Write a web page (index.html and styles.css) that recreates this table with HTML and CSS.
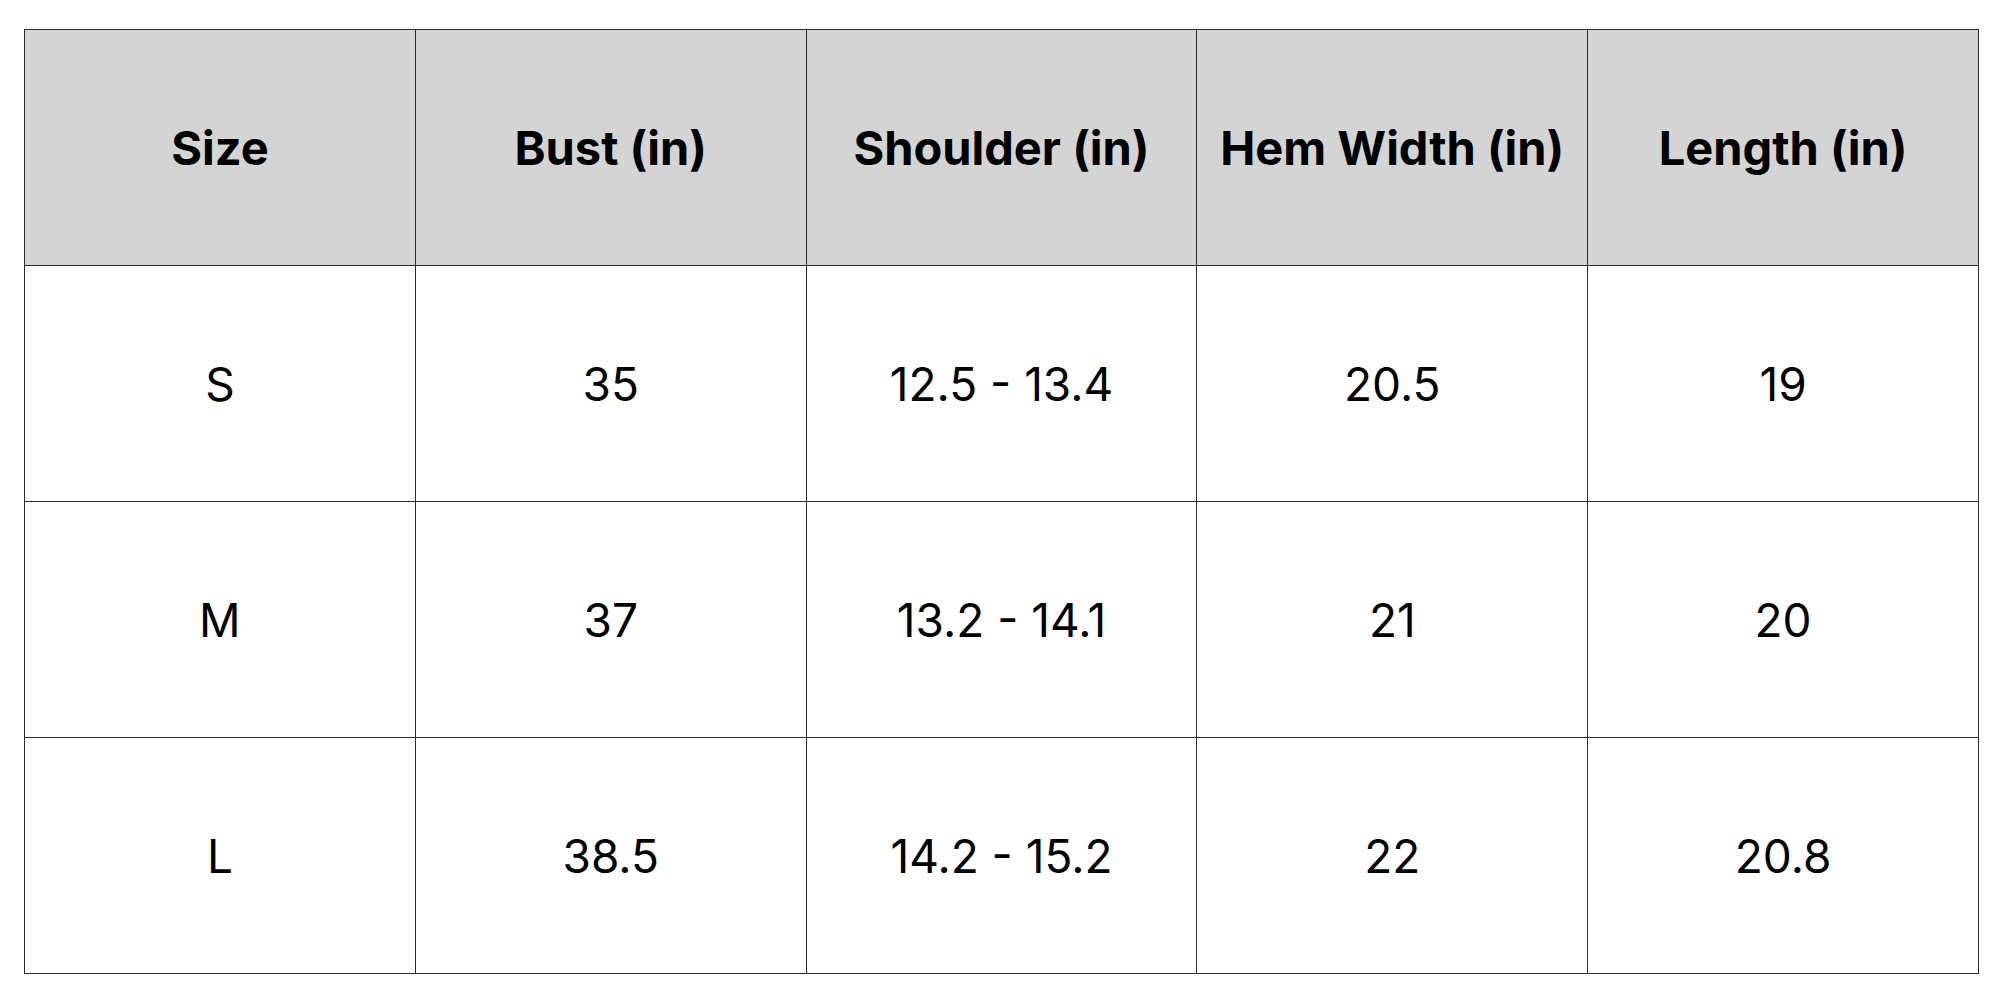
FILE: index.html
```html
<!DOCTYPE html>
<html>
<head>
<meta charset="utf-8">
<link rel="stylesheet" href="styles.css">
</head>
<body>
<table class="size-table">
  <thead>
    <tr><th>Size</th><th>Bust (in)</th><th>Shoulder (in)</th><th>Hem Width (in)</th><th>Length (in)</th></tr>
  </thead>
  <tbody>
    <tr><td>S</td><td>35</td><td>12.5 - 13.4</td><td>20.5</td><td>19</td></tr>
    <tr><td>M</td><td>37</td><td>13.2 - 14.1</td><td>21</td><td>20</td></tr>
    <tr><td>L</td><td>38.5</td><td>14.2 - 15.2</td><td>22</td><td>20.8</td></tr>
  </tbody>
</table>
</body>
</html>
```
FILE: styles.css
```css
html, body { margin: 0; padding: 0; background: #fff; }
body { padding: 29px 0 0 24px; }
.size-table {
  border-collapse: collapse;
  table-layout: fixed;
  width: 1955px;
  font-family: "Inter", sans-serif;
  color: #000;
}
.size-table th, .size-table td {
  border: 1px solid #2b2b2b;
  height: 236px;
  padding: 0;
  text-align: center;
  vertical-align: middle;
  font-size: 46px;
  box-sizing: border-box;
}
.size-table th {
  background: #d4d4d4;
  font-weight: 700;
  font-size: 47px;
}
.size-table td { font-weight: 400; }
```
